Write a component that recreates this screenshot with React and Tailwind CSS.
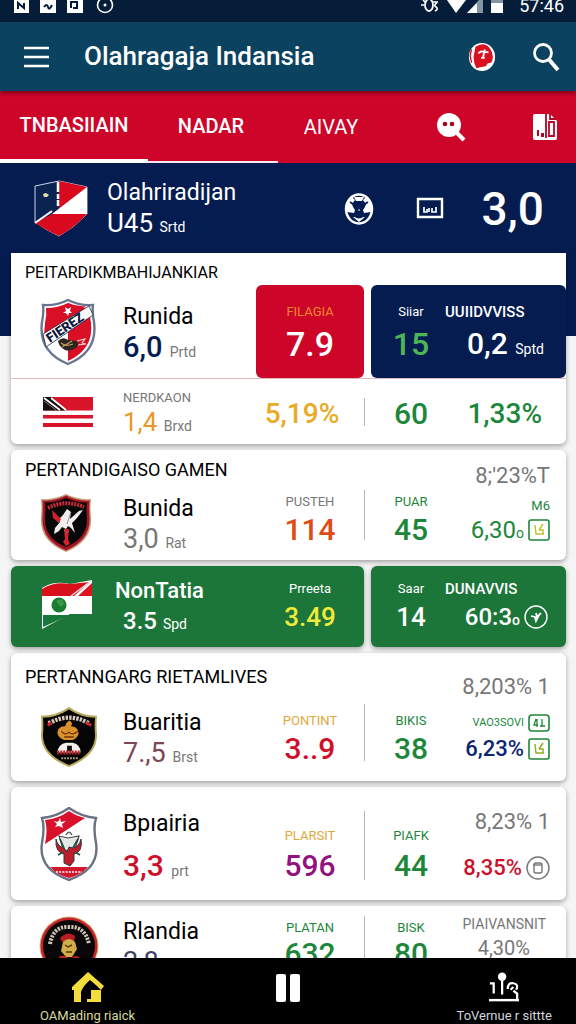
import clsx from "clsx";

/* ---------- crests and flags ---------- */

const HeroShield = () => (
  <svg viewBox="0 0 54 60" className="h-[60px] w-[54px] shrink-0">
    <path d="M1 7L25 2L53 8V35Q40 49 25 57Q10 50 1 43Z" fill="#0b2350" stroke="#c9d3e6" strokeWidth="1" />
    <path d="M25 2L53 8V11L25 31Z" fill="#d90a1e" />
    <path d="M53 8V35H18Z" fill="#fff" />
    <path d="M18 35H53Q40 49 25 57Q10 50 1 44Z" fill="#d90a1e" />
    <path d="M1 44L18 32" fill="none" stroke="#fff" strokeWidth="2" />
    <path d="M24 3V27" fill="none" stroke="#fff" strokeWidth="2.500" strokeDasharray="10 2 5 1" />
    <path d="M9 15l3-1 3 2-2 2h-3z" fill="#e9dcb0" />
  </svg>
);

const StripedShield = () => (
  <svg viewBox="0 0 56 68" className="h-[68px] w-14 shrink-0">
    <path d="M28 2Q40 8 53 7Q52 14 54 24Q58 54 28 66Q-2 54 2 24Q4 14 3 7Q16 8 28 2Z" fill="#fff" stroke="#6a7690" strokeWidth="2.400" />
    <path d="M28 5Q38 10 50 10Q49 17 51 25Q54 51 28 63Z" fill="#d80f25" />
    <path d="M28 5Q18 10 6 10Q7 17 5 25L4 37L46 8Q37 9 28 5Z" fill="#d80f25" />
    <path d="M3 36L49 8L53 17L6 49Z" fill="#fff" stroke="#1c2340" strokeWidth="0.800" />
    <text x="0" y="0" transform="translate(10 45) rotate(-34)" fontFamily="Roboto, sans-serif" fontSize="13" fontWeight="900" fill="#10193a">FIEREZ</text>
    <path d="M25 9l3 2 3-2-1 4 2 2h-3l-1 3-2-3h-3l3-2z" fill="#fff" />
    <path d="M18 43q5-5 10-1l8 1q4 1 1 6-6 5-12 3-6-3-7-9z" fill="#2b2620" />
    <path d="M21 45q4 4 12 1M22 49l10-6" stroke="#c59a58" strokeWidth="1.300" fill="none" />
    <path d="M37 43l8-2-3 4 4 1-8 1" stroke="#f4d8d0" strokeWidth="1.100" fill="none" />
  </svg>
);

const RedStripeFlag = () => (
  <svg viewBox="0 0 50 30" className="h-[30px] w-[50px] shrink-0">
    <path fill="#fff" d="M0 0H50V30H0z" />
    <path fill="#d8142a" d="M0 0H50V13.500H0zM0 18H50V21.500H0zM0 26H50V30H0z" />
    <path fill="#14100f" d="M0 0H8L22 13.500H0z" />
    <path d="M1 1L17 13M8 1L23 13" stroke="#fff" strokeWidth="1.700" />
    <path d="M1 4L13 13" stroke="#b88" strokeWidth="0.800" />
  </svg>
);

const EagleShield = () => (
  <svg viewBox="0 0 52 60" className="h-[60px] w-[52px] shrink-0">
    <path d="M26 1Q38 7 51 6Q50 14 51 24Q53 48 26 59Q-1 48 1 24Q2 14 1 6Q14 7 26 1Z" fill="#c79a78" />
    <path d="M26 2.500Q38 8.500 49.500 7.500Q49 15 49.500 24Q51 47 26 57.500Q1 47 2.500 24Q3 15 2.500 7.500Q14 8.500 26 2.500Z" fill="#a51425" />
    <path d="M26 5Q37 10 47 9.500Q46 17 47 25Q48 45 26 54Q4 45 5 25Q6 17 5 9.500Q15 10 26 5Z" fill="#080708" />
    <path d="M8 15Q26 6 44 14" fill="none" stroke="#cb2a39" strokeWidth="4" strokeDasharray="2 1" />
    <path d="M27 16l4 3-1 7 9-8 4-1-6 8-5 5 3 10-4-5-3-2-2 3-4-2-3 4-5 3 1-6 5-6-5-6 5 2 3-3z" fill="#f2eeee" />
    <path d="M12 17l9 9-2 4-6-5zM24 36h5l-1 10 2 5-4 2-3-4 2-3z" fill="#d3202f" />
    <path d="M24 37l3 3 2-2M31 19l-4 12" stroke="#777" strokeWidth="0.800" fill="none" />
  </svg>
);

const GreenFlag = () => (
  <svg viewBox="0 0 54 52" className="h-[52px] w-[54px] shrink-0">
    <path d="M2 9Q14 1 30 5L52 1V35H30L2 50Z" fill="#fff" />
    <path d="M2 10Q14 2 30 5L50 3L34 17H2Z" fill="#d8101c" />
    <path d="M38 17L52 4V17Z" fill="#dd1320" />
    <path d="M3 36H30L3 48Z" fill="#16793a" />
    <path d="M51 2L31 17" stroke="#f3e5e5" strokeWidth="1.400" />
    <circle cx="19" cy="26" r="7.500" fill="#197d31" />
    <path d="M16 22l6-2 2 5-3 3z" fill="#3a9a48" />
  </svg>
);

const GarudaShield = () => (
  <svg viewBox="0 0 60 64" className="h-[62px] w-[58px] shrink-0">
    <path d="M30 1Q43 10 59 10Q58 18 59 30Q59 52 30 63Q1 52 1 30Q2 18 1 10Q17 10 30 1Z" fill="#b8a85c" />
    <path d="M30 3.500Q43 12 57 12Q56 20 57 30Q57 50 30 61Q3 50 3 30Q4 20 3 12Q17 12 30 3.500Z" fill="#060506" />
    <path d="M9 18Q30 6 51 18" fill="none" stroke="#d9c6bd" strokeWidth="4.500" strokeDasharray="2.500 1.200" />
    <path d="M8 20l4-3M48 17l5 3" stroke="#cc2630" strokeWidth="3" />
    <path d="M30 15q5 2 2 6 7 0 8 7-1 5-6 7h-9q-7-3-7-8 1-6 8-6l1-3z" fill="#dc922c" />
    <path d="M22 26q4 5 8 1 4 4 9-1M25 32h10" stroke="#6b3509" strokeWidth="1.300" fill="none" />
    <path d="M18 48q1-9 9-10h7q8 2 8 10z" fill="#f4f1ee" />
    <path d="M28 41h5v6h-5z" fill="#151112" />
    <path d="M18 48H42" stroke="#bd2026" strokeWidth="4" strokeDasharray="2 1" />
    <path d="M22 54H39" stroke="#a29b77" strokeWidth="2" strokeDasharray="2 1" />
  </svg>
);

const BullShield = () => (
  <svg viewBox="0 0 58 74" className="h-[74px] w-[58px] shrink-0">
    <path d="M29 1Q42 10 56 11Q53 20 56 36Q60 62 29 73Q-2 62 2 36Q5 20 2 11Q16 10 29 1Z" fill="#fff" stroke="#6a7184" strokeWidth="2.400" />
    <path d="M29 4Q36 9 45 11L5 37Q8 22 5 13Q18 12 29 4Z" fill="#d8102a" />
    <path d="M14 14l4 1 2-4 1 4 5-1-4 3 1 4-4-2-4 1 2-3z" fill="#fff" />
    <path d="M10 60H48Q41 68 29 71Q17 68 10 60Z" fill="#d0172b" />
    <path d="M16 65H42" stroke="#f2c7c7" strokeWidth="2" strokeDasharray="2 1.200" />
    <path d="M26 28q3-6 6 0M19 29l9 2 11-2-4 13-6 3-6-3z" fill="#e6e8e8" stroke="#43494a" strokeWidth="1.200" />
    <path d="M16 32q2 8 8 9l3 4 2-5 4 1q6-1 8-9 2 13-7 15v7l-4 5-6-3v-9q-9-2-8-14z" fill="#be1c2c" stroke="#2e3a33" strokeWidth="1" />
    <path d="M20 32l4 9M38 32l-5 9M18 48l5-3M40 48l-5-3" stroke="#2d5140" strokeWidth="1.800" />
  </svg>
);

const RoundCrest = () => (
  <svg viewBox="0 0 60 60" className="size-[60px] shrink-0">
    <circle cx="30" cy="30" r="29.500" fill="#d7b27a" />
    <circle cx="30" cy="30" r="28.500" fill="#c4232a" />
    <circle cx="30" cy="30" r="26" fill="#0a0708" />
    <path d="M11 28Q14 10 30 11Q46 10 50 28" fill="none" stroke="#cfc5b7" strokeWidth="4" strokeDasharray="2.200 1.200" />
    <path d="M21 22q8-8 15-2l-1 6h-12z" fill="#b81d25" />
    <path d="M24 26q6-6 12 0l2 7-5 8h-6l-5-6z" fill="#d2ad4a" />
    <path d="M26 29l3 2 4-2M27 36h6" stroke="#56370c" strokeWidth="1.400" fill="none" />
    <path d="M18 48q0-10 8-8l5 3 5-3q8 0 7 12H18z" fill="#c01f28" />
  </svg>
);

/* ---------- small icons ---------- */

const SquareBadge = ({ className, tick = "#c0c026" }) => (
  <svg viewBox="0 0 22 22" className={clsx("size-[22px] shrink-0", className)} fill="none">
    <rect x="1" y="1" width="20" height="20" rx="2" stroke="currentColor" strokeWidth="1.600" />
    <path d="M7 6l1 9h8M11 11l4-6M11 11h4v4" stroke={tick} strokeWidth="1.400" />
  </svg>
);

const RoundBadge = ({ className, children }) => (
  <svg viewBox="0 0 24 24" className={clsx("size-6 shrink-0", className)} fill="none" stroke="currentColor" strokeWidth="1.400">
    <circle cx="12" cy="12" r="11" />
    {children}
  </svg>
);

/* ---------- building blocks ---------- */

const Team = ({ crest, name, value, unit, valueClass, className }) => (
  <div className={clsx("flex flex-1 items-center pl-[29px]", className)}>
    <div className="flex w-[83px] shrink-0 items-center">{crest}</div>
    <div className="whitespace-nowrap">
      <div className="text-[23px] leading-8">{name}</div>
      <div className={clsx("leading-7", valueClass)}>
        {value} <span className="text-sm font-normal text-[#777]">{unit}</span>
      </div>
    </div>
  </div>
);

const Stat = ({ label, value, labelClass, valueClass, className }) => (
  <div className={clsx("flex shrink-0 flex-col items-center whitespace-nowrap", className)}>
    {label && <span className={clsx("text-[13px] leading-6", labelClass)}>{label}</span>}
    <span className={clsx("font-medium", valueClass)}>{value}</span>
  </div>
);

const Card = ({ children, className }) => (
  <article className={clsx("flex rounded-md bg-white shadow-[0_2px_5px_rgba(0,0,0,0.35)]", className)}>{children}</article>
);

const Divider = ({ className }) => <div className={clsx("w-px shrink-0 bg-[#b5b5b5]", className)} />;

const SectionTitle = ({ children, className }) => (
  <h2 className={clsx("pl-[14px] whitespace-nowrap", className)}>{children}</h2>
);

const StatusBar = () => (
  <div className="flex h-[22px] shrink-0 items-start justify-between overflow-hidden bg-[#061d3a] pr-3 pl-[14px] text-white">
    <svg viewBox="0 0 104 14" className="h-[14px] w-[104px]" fill="none">
      <path d="M0 0H15V13H0zM26 0H42V13H26zM53 0H69V13H53z" fill="#fff" />
      <path d="M4 9V3l6 5V3M30 7q3-4 4 0t4-2M57 8V2h6v6l-4 0" stroke="#061d3a" strokeWidth="2" />
      <circle cx="91" cy="5" r="7.500" stroke="#fff" strokeWidth="1.600" />
      <circle cx="91" cy="5" r="1.500" fill="#fff" />
    </svg>
    <div className="flex items-start gap-2">
      <svg viewBox="0 0 92 14" className="h-[14px] w-[92px]" fill="none">
        <ellipse cx="10" cy="5" rx="4" ry="6" stroke="#fff" strokeWidth="1.800" />
        <path d="M2 5h3M13 2h6M18 3q-4 2-1 4t-1 4M4 0l3 3" stroke="#fff" strokeWidth="1.600" />
        <path d="M28 0H47L37 13Z" fill="#fff" />
        <path d="M48 13L60 0H64V13Z" fill="#8595a8" />
        <path d="M48 13L58 3V13Z" fill="#fff" />
        <path d="M72 0H84V13H72z" fill="#fff" />
        <path d="M72 0H84V3H72z" fill="#8595a8" />
      </svg>
      <span className="text-lg leading-3">57:46</span>
    </div>
  </div>
);

const AppBar = () => (
  <header className="z-10 flex h-[69px] shrink-0 items-center bg-[#0b425f] pr-4 pl-6 text-white shadow-[0_2px_4px_rgba(0,0,0,0.4)]">
    <button aria-label="Menu">
      <svg viewBox="0 0 25 22" className="h-[22px] w-[25px]" stroke="currentColor" strokeWidth="2.500">
        <path d="M0 2H25M0 11H25M0 20H25" />
      </svg>
    </button>
    <h1 className="flex-1 pl-[35px] text-[26px] font-medium whitespace-nowrap">Olahragaja Indansia</h1>
    <button aria-label="Indonesia" className="mr-9">
      <svg viewBox="0 0 30 32" className="h-[30px] w-7">
        <ellipse cx="15" cy="16" rx="14" ry="15" fill="#fff" />
        <path d="M8 5q9-6 15 1 6 8 2 16l-4 1-2 3-6 1-4 1q-3-5-3-12z" fill="#d9101f" />
        <path d="M11 12l3-2 8 1M18 8l-2 9M14 17h4" stroke="#fff" strokeWidth="2" fill="none" />
        <path d="M4 8q-3 7 0 14" stroke="#d9101f" strokeWidth="1.500" fill="none" />
      </svg>
    </button>
    <button aria-label="Cari">
      <svg viewBox="0 0 28 30" className="h-[30px] w-7" fill="none" stroke="currentColor">
        <circle cx="11" cy="11" r="8.500" strokeWidth="2.800" />
        <path d="M17 17.500L26 28" strokeWidth="4" />
      </svg>
    </button>
  </header>
);

const Tabs = () => (
  <nav className="flex h-[72px] shrink-0 items-stretch bg-[#cd0529] text-xl font-medium text-white">
    <button className="w-[148px] border-b-4 border-white">TNBASIIAIN</button>
    <button className="w-[130px] border-b-2 border-pink-100 pr-1">NADAR</button>
    <button className="w-[106px] font-normal">AIVAY</button>
    <div className="flex flex-1 items-center justify-end gap-[66px] pr-[18px]">
      <button aria-label="Jelajahi">
        <svg viewBox="0 0 30 30" className="size-[30px]">
          <circle cx="13" cy="13" r="12" fill="#fff" />
          <path d="M20 20L28 28" stroke="#fff" strokeWidth="4" />
          <circle cx="9" cy="12" r="2.300" fill="#a10522" />
          <circle cx="16" cy="12" r="2.300" fill="#a10522" />
        </svg>
      </button>
      <button aria-label="Berita">
        <svg viewBox="0 0 26 28" className="h-7 w-[26px]">
          <path d="M3 1H18L25 8V25Q25 27 23 27H3Q1 27 1 25V3Q1 1 3 1Z" fill="#fff" />
          <path d="M14 1V25M17 9h5v14h-5zM18 1v5h6" fill="none" stroke="#b30626" strokeWidth="1.800" />
          <path d="M5 17h2v6H5zM9 20h3v4H9z" fill="#b30626" />
        </svg>
      </button>
    </div>
  </nav>
);

const Hero = () => (
  <section className="flex h-[173px] items-start bg-[#051c50] pt-3 pr-8 pl-[34px] text-white">
    <div className="mt-1 w-[73px]">
      <HeroShield />
    </div>
    <div className="flex-1 whitespace-nowrap">
      <div className="text-[23px] leading-9">Olahriradijan</div>
      <div className="text-[26px] leading-6">
        U45 <span className="text-sm">Srtd</span>
      </div>
    </div>
    <svg viewBox="0 0 30 32" className="mt-[18px] h-8 w-[30px]">
      <ellipse cx="15" cy="16" rx="13" ry="14.500" fill="none" stroke="#fff" strokeWidth="2.500" />
      <path d="M3 10l5-6 3 3-3 4 1 3 2 3-1 3-7-1zM27 10l-5-6-3 3 3 4-1 3-2 3 1 3 7-1z" fill="#fff" />
      <path d="M10 4h10l-2 4h-6zM9 24l6 5 6-5" fill="#fff" />
      <path d="M10 22q5 5 10 0M6 9l3 2M24 9l-3 2" stroke="#051c50" strokeWidth="1.800" fill="none" />
      <circle cx="15" cy="17" r="0.800" fill="#fff" />
    </svg>
    <svg viewBox="0 0 28 24" className="mt-[22px] ml-[42px] h-6 w-7" fill="none" stroke="#fff">
      <path d="M2 21V2H26V21M1 20H27" strokeWidth="2.400" />
      <path d="M8 10v5h3v-3M13 15v-4M16 11v4h4v-5" strokeWidth="1.700" />
    </svg>
    <div className="mt-3 ml-[37px] text-[46px] leading-[44px] font-medium">3,0</div>
  </section>
);

const BottomNav = () => (
  <nav className="grid h-[66px] shrink-0 grid-cols-3 items-start bg-black pr-6 pl-10 text-[13px] leading-5">
    <a href="#home" className="flex flex-col items-center justify-self-start pt-[14px] text-[#d8d9a0]">
      <svg viewBox="0 0 32 30" className="mb-1 h-[30px] w-8">
        <path d="M16 0L32 14L29 18L25 14L18 8Q11 14 9 20V30H2V18H0V15Z" fill="#f2dd3c" />
        <path d="M19 18H29V30H15V27H19Z" fill="#f2dd3c" />
      </svg>
      OAMading riaick
    </a>
    <button aria-label="Jeda" className="flex justify-center gap-1 pt-4 pr-4">
      <span className="h-7 w-[10px] rounded-xs bg-white" />
      <span className="h-7 w-[10px] rounded-xs bg-white" />
    </button>
    <a href="#tournament" className="flex flex-col items-center justify-self-end pt-[14px] text-gray-300">
      <svg viewBox="0 0 34 32" className="mb-1 h-[30px] w-8" fill="none" stroke="#fff">
        <path d="M2 12h4v11M15 8V24M21 18q0-7 6-6 6 1 3 7M24 19l3-3M27 20l4 3v7" strokeWidth="2.400" />
        <circle cx="15" cy="5" r="4.500" fill="#fff" stroke="none" />
        <path d="M1 30H33" strokeWidth="2.600" />
      </svg>
      ToVernue r sittte
    </a>
  </nav>
);

export default function App() {
  return (
    <div className="flex h-screen flex-col overflow-hidden bg-[#f5f5f6] font-[Roboto,sans-serif] text-black">
      <StatusBar />
      <AppBar />
      <Tabs />

      <main className="min-h-0 flex-1 overflow-y-auto [scrollbar-width:none]">
        <Hero />

        <div className="-mt-[83px] flex flex-col gap-1.5 pr-[10px] pl-[11px]">
          <Card className="flex-col rounded-t-none">
            <SectionTitle className="h-8 text-base leading-10">PEITARDIKMBAHIJANKIAR</SectionTitle>
            <div className="flex h-[94px] border-b border-[#e3b9bb]">
              <Team crest={<StripedShield />} name="Runida" value="6,0" unit="Prtd" valueClass="text-[29px] font-medium text-[#051c50]" />
              <Stat
                className="w-[108px] justify-center rounded-md bg-[#cd0529]"
                label="FILAGIA"
                labelClass="text-[#f08a2c]"
                value="7.9"
                valueClass="text-[34px] leading-10 font-bold text-white"
              />
              <div className="ml-[7px] flex w-[195px] shrink-0 items-center rounded-md bg-[#051c50] text-white">
                <Stat className="w-20" label="Siiar" value="15" valueClass="text-[32px] leading-10 text-[#4fb657]" />
                <div className="flex-1 whitespace-nowrap">
                  <div className="-ml-1.5 text-[15px] leading-6 font-medium">UUIIDVVISS</div>
                  <div className="pl-4 text-[30px] leading-10 font-medium">
                    0,2 <span className="text-sm font-normal">Sptd</span>
                  </div>
                </div>
              </div>
            </div>
            <div className="flex h-[65px] items-center">
              <div className="flex min-w-0 flex-1 items-center pl-8">
                <div className="w-20">
                  <RedStripeFlag />
                </div>
                <div className="whitespace-nowrap">
                  <div className="text-[13px] leading-5 text-[#777]">NERDKAON</div>
                  <div className="text-[26px] leading-7 text-[#e8992c]">
                    1,4 <span className="text-sm text-[#777]">Brxd</span>
                  </div>
                </div>
              </div>
              <Stat className="w-[108px] pt-1 pr-4" value="5,19%" valueClass="text-[28px] text-[#ebaa25]" />
              <Divider className="h-7" />
              <Stat className="ml-1.5 w-20 pt-1" value="60" valueClass="text-3xl text-[#1c873a]" />
              <div className="w-[115px] shrink-0 pt-1 pr-6 text-right text-[28px] font-medium text-[#1c873a]">1,33%</div>
            </div>
          </Card>

          <Card className="h-[110px]">
            <div className="flex min-w-0 flex-1 flex-col">
              <SectionTitle className="h-10 text-lg leading-10">PERTANDIGAISO GAMEN</SectionTitle>
              <Team className="pb-1" crest={<EagleShield />} name="Bunida" value="3,0" unit="Rat" valueClass="text-[27px] text-[#777]" />
            </div>
            <Stat
              className="w-[108px] justify-end pb-[14px]"
              label="PUSTEH"
              labelClass="text-[#777]"
              value="114"
              valueClass="text-3xl leading-8 text-[#e04a14]"
            />
            <Divider className="mt-10 mb-5" />
            <Stat
              className="ml-1.5 w-20 justify-end pb-[14px] text-[#1c873a]"
              label="PUAR"
              value="45"
              valueClass="text-3xl leading-8"
            />
            <div className="flex w-[115px] shrink-0 flex-col items-end justify-end pr-4 pb-4 whitespace-nowrap text-[#1c873a]">
              <div className="mb-1 text-[22px] leading-8 text-[#777]">8;'23%T</div>
              <div className="text-[13px] leading-5">M6</div>
              <div className="flex items-center gap-1 text-2xl leading-7">
                <span>
                  6,30<span className="text-sm">o</span>
                </span>
                <SquareBadge />
              </div>
            </div>
          </Card>

          <article className="flex h-[81px] gap-[7px] text-white">
            <div className="flex flex-1 rounded-md bg-[#1c7539] pb-1 shadow-[0_2px_5px_rgba(0,0,0,0.35)]">
              <div className="flex min-w-0 flex-1 items-center pl-[29px]">
                <div className="w-[75px]">
                  <GreenFlag />
                </div>
                <div className="whitespace-nowrap">
                  <div className="text-[22px] leading-8 font-medium">NonTatia</div>
                  <div className="pl-2 text-2xl leading-7 font-medium">
                    3.5 <span className="text-sm font-normal">Spd</span>
                  </div>
                </div>
              </div>
              <Stat className="w-[108px] justify-center" label="Prreeta" value="3.49" valueClass="text-[26px] leading-8 text-[#f0ea3c]" />
            </div>
            <div className="flex w-[195px] shrink-0 items-center rounded-md bg-[#1c7539] pb-1 shadow-[0_2px_5px_rgba(0,0,0,0.35)]">
              <Stat className="w-20" label="Saar" value="14" valueClass="text-[26px] leading-8" />
              <div className="flex-1 whitespace-nowrap">
                <div className="-ml-1.5 text-[15px] leading-6 font-medium">DUNAVVIS</div>
                <div className="flex items-center justify-end gap-1 pr-[18px] text-2xl leading-8 font-medium">
                  <span>
                    60:3<span className="text-sm">o</span>
                  </span>
                  <RoundBadge>
                    <path d="M7 11l4 1 1 4 3-6M12 8l1 4 4-4" strokeWidth="1.800" />
                  </RoundBadge>
                </div>
              </div>
            </div>
          </article>

          <Card className="h-32">
            <div className="flex min-w-0 flex-1 flex-col">
              <SectionTitle className="h-12 text-lg leading-[48px]">PERTANNGARG RIETAMLIVES</SectionTitle>
              <Team className="pb-2" crest={<GarudaShield />} name="Buaritia" value="7.,5" unit="Brst" valueClass="text-[27px] text-[#7f4656]" />
            </div>
            <Stat
              className="w-[108px] justify-end pb-4"
              label="PONTINT"
              labelClass="text-[#dfa83c]"
              value="3..9"
              valueClass="text-3xl leading-8 text-[#cf1028]"
            />
            <Divider className="mt-[51px] mb-5" />
            <Stat className="ml-1.5 w-20 justify-end pb-4 text-[#1c873a]" label="BIKIS" value="38" valueClass="text-3xl leading-8" />
            <div className="flex w-[115px] shrink-0 flex-col items-end justify-end pr-4 pb-[18px] whitespace-nowrap">
              <div className="mb-2 text-[22px] leading-8 text-[#777]">8,203% 1</div>
              <div className="flex items-center gap-1 text-[11px] leading-6 text-[#1c873a]">
                VAO3SOVI
                <svg viewBox="0 0 22 18" className="h-[18px] w-[22px]" fill="none" stroke="currentColor">
                  <rect x="1" y="1" width="20" height="16" rx="3" strokeWidth="1.600" />
                  <path d="M8 5l-2 6h4M9 5v8M14 5v7M12 12h5" strokeWidth="1.300" />
                </svg>
              </div>
              <div className="flex items-center gap-1 text-[22px] leading-7 font-medium text-[#0b2472]">
                6,23%
                <SquareBadge className="text-[#1c873a]" tick="#8fae1d" />
              </div>
            </div>
          </Card>

          <Card className="h-[113px]">
            <div className="flex min-w-0 flex-1 items-center pl-[29px]">
              <div className="w-[83px]">
                <BullShield />
              </div>
              <div className="whitespace-nowrap">
                <div className="text-[23px] leading-9">Bpıairia</div>
                <div className="mt-2 text-3xl leading-8 font-medium text-[#cd0f2b]">
                  3,3 <span className="text-sm font-normal text-[#777]">prt</span>
                </div>
              </div>
            </div>
            <Stat
              className="w-[108px] justify-end pb-4"
              label="PLARSIT"
              labelClass="text-[#dfa83c]"
              value="596"
              valueClass="text-3xl leading-9 text-[#92117f]"
            />
            <Divider className="mt-6 mb-5" />
            <Stat className="ml-1.5 w-20 justify-end pb-4 text-[#1c873a]" label="PIAFK" value="44" valueClass="text-3xl leading-9" />
            <div className="flex w-[115px] shrink-0 flex-col items-end justify-end pr-4 pb-4 whitespace-nowrap">
              <div className="mb-[14px] text-[22px] leading-8 text-[#777]">8,23% 1</div>
              <div className="flex items-center gap-1 text-[22px] leading-8 font-medium text-[#cd0f2b]">
                8,35%
                <RoundBadge className="text-[#777]">
                  <rect x="8" y="7" width="8" height="10" rx="2" />
                  <path d="M7 9h9" />
                </RoundBadge>
              </div>
            </div>
          </Card>

          <Card className="h-[113px] items-start pt-[10px]">
            <div className="flex min-w-0 flex-1 items-start pl-7">
              <div className="w-[84px]">
                <RoundCrest />
              </div>
              <div className="whitespace-nowrap">
                <div className="text-[23px] leading-8">Rlandia</div>
                <div className="text-[27px] leading-7 text-[#3f4265]">
                  2,8 <span className="text-sm text-[#777]">Prt</span>
                </div>
              </div>
            </div>
            <Stat className="w-[108px] text-[#1c873a]" label="PLATAN" value="632" valueClass="text-3xl leading-7" />
            <Divider className="h-[70px]" />
            <Stat className="ml-1.5 w-20 text-[#1c873a]" label="BISK" value="80" valueClass="text-3xl leading-7" />
            <div className="w-[115px] shrink-0 pr-5 text-right whitespace-nowrap text-[#777]">
              <div className="text-sm leading-4">PIAIVANSNIT</div>
              <div className="pr-4 text-xl leading-8">4,30%</div>
            </div>
          </Card>
        </div>
      </main>

      <BottomNav />
    </div>
  );
}
